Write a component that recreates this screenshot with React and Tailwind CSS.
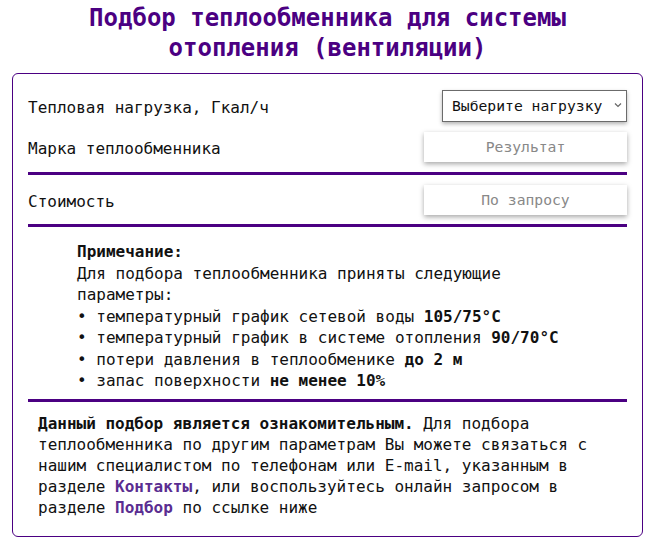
export default function App() {
  const mono = { fontFamily: '"DejaVu Sans Mono", monospace' }

  return (
    <div className="w-[655px] bg-white text-[#111]" style={mono}>
      <h1 className="pt-[3px] text-center text-[24px] font-bold leading-[30px] text-[#4b0082]">
        Подбор теплообменника для системы
        <br />
        отопления (вентиляции)
      </h1>

      <div className="mx-[12px] mt-[10px] rounded-[6px] border border-[#4b0082] px-[15px] pt-[16px] pb-[18px]">
        <div className="flex h-[32px] items-center justify-between">
          <span className="pt-[4px] text-[16px]">Тепловая нагрузка, Гкал/ч</span>
          <div className="relative">
            <select className="h-[32px] w-[185px] appearance-none border border-[#6b6b6b] bg-white pl-[9px] text-[14.7px] text-[#111] shadow-[0_2px_4px_rgba(0,0,0,0.3)] outline-none">
              <option>Выберите нагрузку</option>
            </select>
            <svg
              className="pointer-events-none absolute right-[5px] top-[12px]"
              width="8"
              height="6"
              viewBox="0 0 8 6"
              fill="none"
              stroke="#666"
              strokeWidth="1.2"
            >
              <path d="M1 1.5 L4 4.5 L7 1.5" />
            </svg>
          </div>
        </div>

        <div className="mt-[10px] flex h-[30px] items-center justify-between">
          <span className="pt-[3px] text-[16px]">Марка теплообменника</span>
          <div className="flex h-[30px] w-[203px] items-center justify-center bg-white text-[14.7px] text-[#888] shadow-[0_2px_5px_rgba(0,0,0,0.35)]">
            Результат
          </div>
        </div>

        <div className="mt-[10px] h-[3px] bg-[#4b0082]" />

        <div className="mt-[10px] flex h-[30px] items-center justify-between">
          <span className="pt-[4px] text-[16px]">Стоимость</span>
          <div className="flex h-[30px] w-[203px] items-center justify-center bg-white text-[14.7px] text-[#888] shadow-[0_2px_5px_rgba(0,0,0,0.35)]">
            По запросу
          </div>
        </div>

        <div className="mt-[9px] h-[3px] bg-[#4b0082]" />

        <div className="ml-[49px] w-[500px] pt-[14px] text-[16px] leading-[21.5px]">
          <div className="font-bold">Примечание:</div>
          <div>Для подбора теплообменника приняты следующие параметры:</div>
          <ul>
            <li>• температурный график сетевой воды <b>105/75°C</b></li>
            <li>• температурный график в системе отопления <b>90/70°C</b></li>
            <li>• потери давления в теплообменике <b>до 2 м</b></li>
            <li>• запас поверхности <b>не менее 10%</b></li>
          </ul>
        </div>

        <div className="mt-[7px] h-[3px] bg-[#4b0082]" />

        <p className="px-[10px] pt-[11px] text-[16px] leading-[21px]">
          <b>Данный подбор является ознакомительным.</b> Для подбора теплообменника по другим
          параметрам Вы можете связаться с нашим специалистом по телефонам или E-mail, указанным в
          разделе <a className="font-bold text-[#5a2d91]">Контакты</a>, или воспользуйтесь онлайн
          запросом в разделе <a className="font-bold text-[#5a2d91]">Подбор</a> по ссылке ниже
        </p>
      </div>
    </div>
  )
}
